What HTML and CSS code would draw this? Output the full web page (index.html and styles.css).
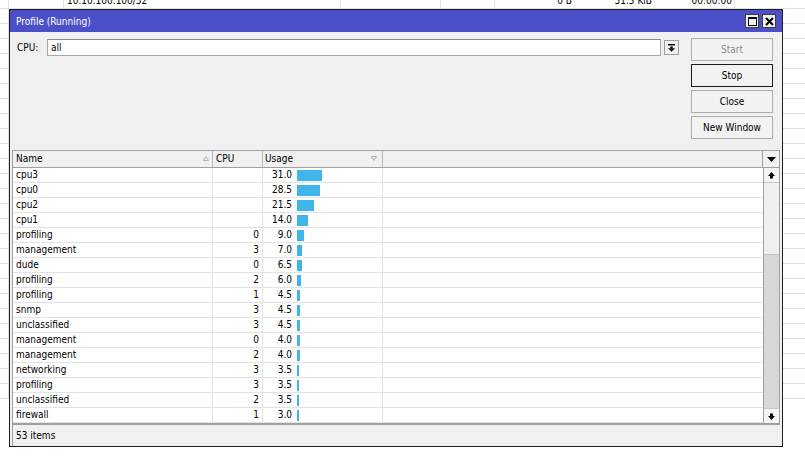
FILE: index.html
```html
<!DOCTYPE html>
<html>
  <head>
    <meta charset="UTF-8" />
    <title>Profile</title>
    <link rel="stylesheet" href="styles.css">
  </head>
  <body>
    <!-- list in the main window, mostly hidden behind the dialog -->
    <div class="desk">
      <div class="desk-row">
        <div class="dc c0"></div>
        <div class="dc c1"></div>
        <div class="dc c2">10.10.100.100/32</div>
        <div class="dc c3"></div>
        <div class="dc c4"></div>
        <div class="dc c5 num">0 B</div>
        <div class="dc c6 num">31.5 KiB</div>
        <div class="dc c7 num">00:00:00</div>
      </div>
    </div>

    <div class="win">
      <div class="win-title">
        <span>Profile (Running)</span>
        <div class="win-btns">
          <div class="tbtn">
            <svg width="9" height="9" viewBox="0 0 9 9">
              <rect x="0.5" y="0.5" width="8" height="8" fill="none" stroke="#000" />
              <rect x="0" y="0" width="9" height="2" fill="#000" />
            </svg>
          </div>
          <div class="tbtn">
            <svg width="9" height="9" viewBox="0 0 9 9">
              <path d="M1 1 L8 8 M8 1 L1 8" stroke="#000" stroke-width="2" />
            </svg>
          </div>
        </div>
      </div>

      <div class="win-body">
        <div class="top">
          <div class="cpu-row">
            <label for="cpuSel">CPU:</label>
            <div class="field" id="cpuSel">all</div>
            <div class="drop">
              <svg width="7" height="8" viewBox="0 0 7 8">
                <rect x="0" y="0" width="7" height="1.4" fill="#000" />
                <rect x="2.3" y="2.4" width="2.4" height="2" fill="#000" />
                <path d="M0 4.2 H7 L3.5 7.8 Z" fill="#000" />
              </svg>
            </div>
          </div>
          <div class="actions">
            <button class="btn" disabled>Start</button>
            <button class="btn btn-default">Stop</button>
            <button class="btn">Close</button>
            <button class="btn">New Window</button>
          </div>
        </div>

        <div class="table">
          <div class="thead">
            <div class="th col-name">
              <span>Name</span>
              <svg class="sort" width="6" height="5" viewBox="0 0 6 5">
                <path d="M0.5 4.5 L3 0.5 L5.5 4.5 Z" fill="none" stroke="#b4b4b4" />
              </svg>
            </div>
            <div class="th col-cpu">CPU</div>
            <div class="th col-usage">
              <span>Usage</span>
              <svg class="sort" width="6" height="5" viewBox="0 0 6 5">
                <path d="M0.5 0.5 L3 4.5 L5.5 0.5 Z" fill="none" stroke="#b4b4b4" />
              </svg>
            </div>
            <div class="th col-fill"></div>
            <div class="th col-menu">
              <svg width="9" height="5" viewBox="0 0 9 5">
                <path d="M0 0 H9 L4.5 5 Z" fill="#000" />
              </svg>
            </div>
          </div>

          <div class="tbody">
            <div class="rows" id="rows"></div>
            <div class="vscroll">
              <div class="sbtn">
                <svg width="7" height="7" viewBox="0 0 7 7">
                  <path d="M3.5 0 L7 4 H5 V6.5 H2 V4 H0 Z" fill="#000" />
                </svg>
              </div>
              <div class="track"></div>
              <div class="thumb"></div>
              <div class="sbtn">
                <svg width="7" height="7" viewBox="0 0 7 7">
                  <path d="M3.5 7 L7 3 H5 V0.5 H2 V3 H0 Z" fill="#000" />
                </svg>
              </div>
            </div>
          </div>
        </div>

        <div class="status">53 items</div>
      </div>
    </div>

    <script>
      const tasks = [
        ['cpu3', '', 31.0, 25],
        ['cpu0', '', 28.5, 23],
        ['cpu2', '', 21.5, 17],
        ['cpu1', '', 14.0, 11],
        ['profiling', 0, 9.0, 7],
        ['management', 3, 7.0, 5],
        ['dude', 0, 6.5, 5],
        ['profiling', 2, 6.0, 4],
        ['profiling', 1, 4.5, 3],
        ['snmp', 3, 4.5, 3],
        ['unclassified', 3, 4.5, 3],
        ['management', 0, 4.0, 3],
        ['management', 2, 4.0, 3],
        ['networking', 3, 3.5, 2],
        ['profiling', 3, 3.5, 2],
        ['unclassified', 2, 3.5, 2],
        ['firewall', 1, 3.0, 2],
      ];

      const rowsEl = document.getElementById('rows');
      tasks.forEach(([name, cpu, usage, bar]) => {
        const row = document.createElement('div');
        row.className = 'row';
        row.innerHTML =
          `<div class="td col-name">${name}</div>` +
          `<div class="td col-cpu num">${cpu}</div>` +
          `<div class="td col-usage"><span class="val">${usage.toFixed(1)}</span>` +
          `<span class="bar" style="width: ${bar}px"></span></div>` +
          `<div class="td col-fill"></div>`;
        rowsEl.appendChild(row);
      });

      // empty rows of the list behind the dialog
      const desk = document.querySelector('.desk');
      for (let i = 0; i < 26; i++) {
        const r = document.createElement('div');
        r.className = 'desk-row';
        for (let c = 0; c < 8; c++) {
          const d = document.createElement('div');
          d.className = 'dc c' + c;
          r.appendChild(d);
        }
        desk.appendChild(r);
      }
    </script>
  </body>
</html>
```

FILE: styles.css
```css
:root {
  --panel: #f0f0f0;
  --title: #4b50c9;
  --frame: #1e1e1e;
  --edge: #a0a0a0;
  --grid: #e3e3e3;
  --bar: #3fb5ea;
  --muted: #8a8a8a;
}

body {
  margin: 0;
  padding: 0;
  background: #ffffff;
  overflow: hidden;
  font-family: "DejaVu Sans Condensed", "DejaVu Sans", sans-serif;
  font-stretch: condensed;
  font-size: 10px;
  color: #000;
}

/* background list */

.desk {
  margin-top: -6px;
}

.desk-row {
  display: flex;
  height: 15px;
  line-height: 14px;
  border-bottom: 1px solid var(--grid);
  box-sizing: border-box;
}

.dc {
  flex: none;
  box-sizing: border-box;
  border-right: 1px solid var(--grid);
  padding: 0 3px;
  white-space: nowrap;
}

.dc.num {
  text-align: right;
  padding-right: 2px;
}

.c0 { width: 9px; }
.c1 { width: 55px; }
.c2 { width: 277px; }
.c3 { width: 100px; }
.c4 { width: 54px; }
.c5 { width: 80px; }
.c6 { width: 80px; }
.c7 { width: 80px; }

/* dialog window */

.win {
  position: absolute;
  top: 9px;
  left: 9px;
  width: 774px;
  height: 438px;
  box-sizing: border-box;
  border: 1px solid var(--frame);
  background: var(--panel);
  display: flex;
  flex-direction: column;
}

.win-title {
  height: 22px;
  flex: none;
  background: var(--title);
  color: #fff;
  display: flex;
  align-items: center;
  justify-content: space-between;
  padding: 0 6px 0 6px;
}

.win-btns {
  display: flex;
  gap: 3px;
}

.tbtn {
  width: 12px;
  height: 12px;
  background: #f0f0f0;
  border: 1px solid #3c3c3c;
  display: flex;
  align-items: center;
  justify-content: center;
}

.win-body {
  flex: 1;
  display: flex;
  flex-direction: column;
  padding: 6px 2px 0 2px;
}

.top {
  display: flex;
  align-items: flex-start;
}

.cpu-row {
  flex: 1;
  display: flex;
  align-items: center;
  padding: 1px 12px 0 5px;
}

.cpu-row label {
  width: 30px;
}

.field {
  flex: 1;
  height: 17px;
  line-height: 15px;
  box-sizing: border-box;
  background: #fff;
  border: 1px solid #a8a8a8;
  border-top-color: #8c8c8c;
  padding: 0 3px;
}

.drop {
  width: 15px;
  height: 15px;
  margin-left: 3px;
  box-sizing: border-box;
  border: 1px solid var(--edge);
  display: flex;
  align-items: center;
  justify-content: center;
}

.actions {
  width: 82px;
  margin-right: 7px;
  display: flex;
  flex-direction: column;
  gap: 3px;
}

.btn {
  all: unset;
  height: 23px;
  box-sizing: border-box;
  border: 1px solid #adadad;
  background: #f2f2f2;
  text-align: center;
  line-height: 21px;
}

.btn:disabled {
  color: var(--muted);
}

.btn-default {
  border-color: #1a1a1a;
}

/* profile list */

.table {
  margin-top: 11px;
  border: 1px solid var(--edge);
  border-bottom-width: 2px;
  background: #fff;
}

.thead {
  display: flex;
  height: 17px;
  background: var(--panel);
  border-bottom: 1px solid var(--edge);
  box-sizing: border-box;
}

.th {
  box-sizing: border-box;
  border-right: 1px solid #b9b9b9;
  padding: 0 3px;
  line-height: 16px;
  display: flex;
  align-items: center;
  justify-content: space-between;
}

.th .sort {
  margin-top: -2px;
}

.col-name { width: 200px; flex: none; }
.col-cpu { width: 50px; flex: none; }
.col-usage { width: 120px; flex: none; }
.col-fill { flex: 1; }

.th.col-usage {
  padding-left: 2px;
  padding-right: 5px;
}

.th.col-fill {
  border-right: 1px solid var(--edge);
}

.th.col-menu {
  width: 16px;
  flex: none;
  border-right: 0;
  justify-content: center;
  padding: 0;
}

.tbody {
  display: flex;
}

.rows {
  flex: 1;
}

.row {
  display: flex;
  height: 15px;
  box-sizing: border-box;
  border-bottom: 1px solid var(--grid);
}

.td {
  box-sizing: border-box;
  border-right: 1px solid var(--grid);
  padding: 0 3px;
  line-height: 14px;
  white-space: nowrap;
}

.td.col-fill {
  border-right: 0;
}

.td.num {
  text-align: right;
}

.td.col-usage {
  display: flex;
  align-items: center;
  padding: 0;
}

.val {
  width: 29px;
  text-align: right;
}

.bar {
  height: 11px;
  margin-left: 5px;
  background: var(--bar);
}

.vscroll {
  width: 16px;
  flex: none;
  box-sizing: border-box;
  border-left: 1px solid var(--edge);
  display: flex;
  flex-direction: column;
}

.sbtn {
  height: 15px;
  flex: none;
  box-sizing: border-box;
  background: #f4f4f4;
  border-bottom: 1px solid #c8c8c8;
  display: flex;
  align-items: center;
  justify-content: center;
}

.sbtn:last-child {
  border-bottom: 0;
  border-top: 1px solid #c8c8c8;
}

.track {
  height: 71px;
  background: #efefef;
}

.thumb {
  flex: 1;
  background: #d7d7d7;
  border-top: 1px solid #c4c4c4;
}

.status {
  flex: 1;
  border-left: 1px solid var(--edge);
  padding-left: 3px;
  display: flex;
  align-items: center;
}
```
